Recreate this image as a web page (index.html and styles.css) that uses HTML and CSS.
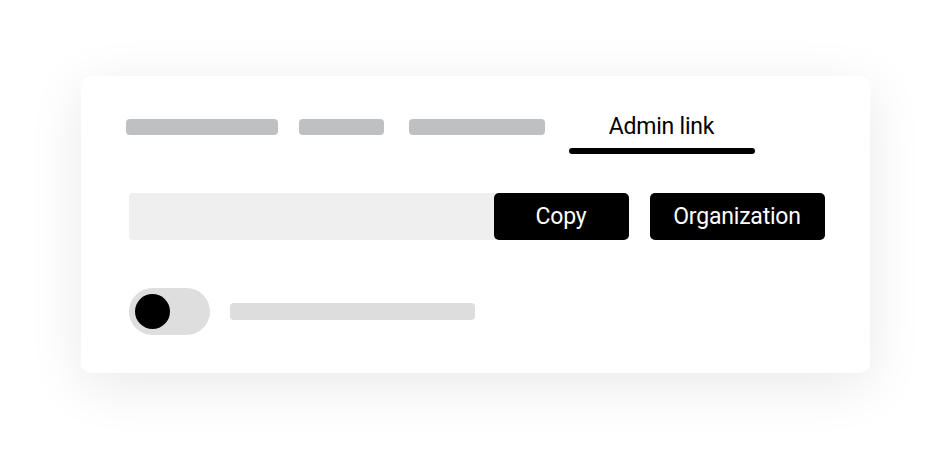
FILE: index.html
```html
<!DOCTYPE html>
<html lang="en">
<head>
    <meta charset="UTF-8">
    <meta name="viewport" content="width=device-width, initial-scale=1.0">
    <title>Admin link</title>
    <link rel="stylesheet" href="styles.css">
</head>
<body>
    <div class="card">
        <div class="tabs">
            <span class="tab-bar tab-bar-1"></span>
            <span class="tab-bar tab-bar-2"></span>
            <span class="tab-bar tab-bar-3"></span>
            <div class="tab-active">
                <span class="tab-label">Admin link</span>
                <span class="tab-underline"></span>
            </div>
        </div>

        <div class="link-row">
            <div class="link-field"></div>
            <button class="btn btn-copy">Copy</button>
            <button class="btn btn-org">Organization</button>
        </div>

        <div class="toggle-row">
            <div class="toggle">
                <span class="toggle-knob"></span>
            </div>
            <span class="toggle-text"></span>
        </div>
    </div>
</body>
</html>
```

FILE: styles.css
```css
body {
    margin: 0;
    padding: 0;
    background-color: #ffffff;
    font-family: Roboto, 'DejaVu Sans', sans-serif;
    color: #000;
    height: 449px;
    display: flex;
    align-items: center;
    justify-content: center;
}
.card {
    width: 789px;
    box-sizing: border-box;
    padding: 36px 45px 38px 48px;
    background-color: #ffffff;
    border-radius: 10px;
    box-shadow: 0 12px 55px rgba(0, 0, 0, 0.09);
}
.tabs {
    display: flex;
    align-items: flex-start;
    margin-left: -3px;
}
.tab-bar {
    display: block;
    height: 16px;
    margin-top: 7px;
    border-radius: 4px;
    background-color: #bfc0c1;
}
.tab-bar-1 {
    width: 152px;
}
.tab-bar-2 {
    width: 85px;
    margin-left: 21px;
}
.tab-bar-3 {
    width: 136px;
    margin-left: 25px;
}
.tab-active {
    width: 186px;
    margin-left: 24px;
    display: flex;
    flex-direction: column;
    align-items: center;
}
.tab-label {
    font-size: 23px;
    line-height: 30px;
    letter-spacing: -0.2px;
}
.tab-underline {
    display: block;
    width: 100%;
    height: 6px;
    margin-top: 6px;
    border-radius: 3px;
    background-color: #000;
}
.link-row {
    display: flex;
    margin-top: 39px;
    height: 47px;
}
.link-field {
    flex: 1;
    margin-right: -6px;
    background-color: #efefef;
    border-radius: 4px 0 0 4px;
}
.btn {
    font-family: Roboto, 'DejaVu Sans', sans-serif;
    font-size: 23px;
    letter-spacing: -0.2px;
    color: #fff;
    background-color: #000;
    border: none;
    border-radius: 5px;
    padding: 0;
    cursor: pointer;
    position: relative;
}
.btn-copy {
    width: 135px;
}
.btn-org {
    width: 175px;
    margin-left: 21px;
}
.toggle-row {
    display: flex;
    align-items: center;
    margin-top: 48px;
}
.toggle {
    width: 81px;
    height: 47px;
    box-sizing: border-box;
    padding: 6px;
    border-radius: 24px;
    background-color: #dedede;
    display: flex;
    align-items: center;
}
.toggle-knob {
    display: block;
    width: 35px;
    height: 35px;
    border-radius: 50%;
    background-color: #000;
}
.toggle-text {
    display: block;
    width: 245px;
    height: 17px;
    margin-left: 20px;
    border-radius: 4px;
    background-color: #dddddd;
}
```
